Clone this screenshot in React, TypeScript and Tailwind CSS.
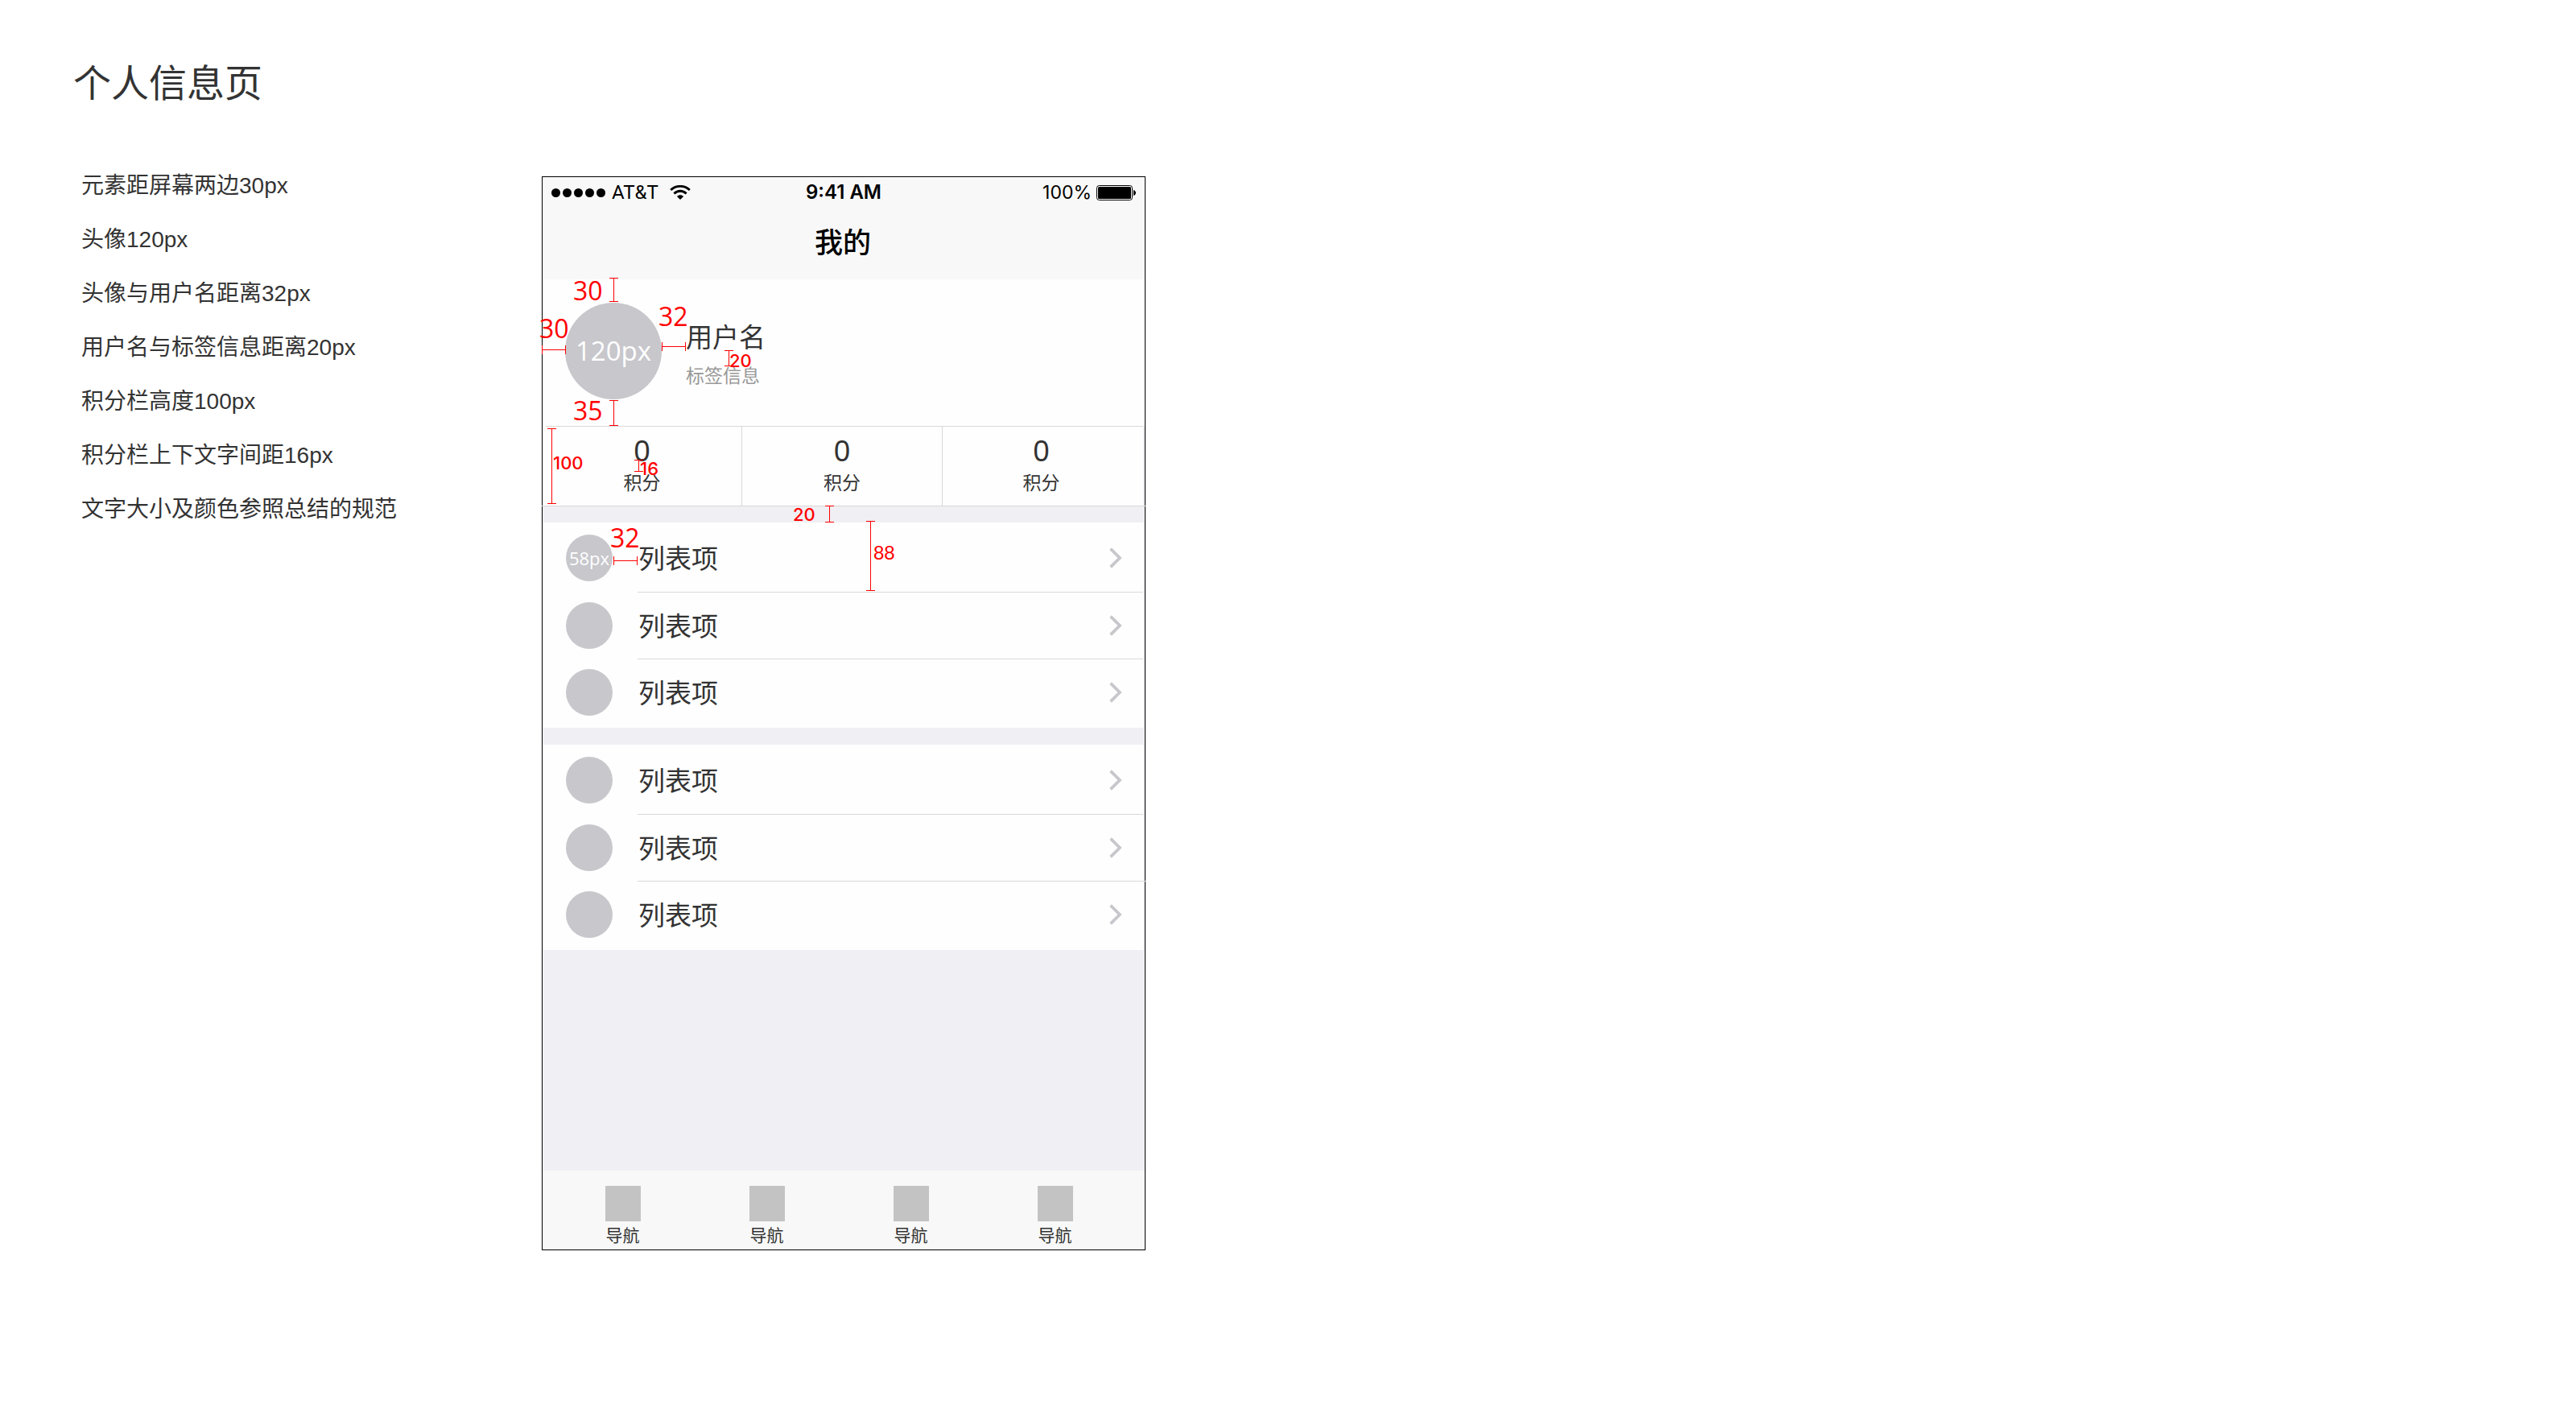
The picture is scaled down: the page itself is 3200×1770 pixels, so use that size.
import type { ReactNode } from "react";

const notes = [
  "元素距屏幕两边30px",
  "头像120px",
  "头像与用户名距离32px",
  "用户名与标签信息距离20px",
  "积分栏高度100px",
  "积分栏上下文字间距16px",
  "文字大小及颜色参照总结的规范",
];

const CJK = "font-['Noto_Sans_CJK_SC',sans-serif]";
const BIG = "font-['Open_Sans',sans-serif] text-[32px] leading-8";
const SMALL = "font-['Inter',sans-serif] text-[22px] leading-6 font-medium";

/* Vertical dimension bracket */
function VMark({ className }: { className: string }) {
  return (
    <span aria-hidden="true" className={`absolute flex w-[11px] justify-center border-y border-[#ff0000] ${className}`}>
      <span className="w-px bg-[#ff0000]" />
    </span>
  );
}

/* Horizontal dimension bracket */
function HMark({ className }: { className: string }) {
  return (
    <span aria-hidden="true" className={`absolute flex h-[11px] items-center border-x border-[#ff0000] ${className}`}>
      <span className="h-px w-full bg-[#ff0000]" />
    </span>
  );
}

function Label({ className, children }: { className: string; children: ReactNode }) {
  return <span className={`absolute whitespace-nowrap text-[#ff0000] ${className}`}>{children}</span>;
}

function Wifi() {
  return (
    <svg aria-hidden="true" className="h-[18px] w-[26px]" viewBox="0 0 26 18" fill="none" stroke="#000" strokeWidth="2.8">
      <path d="M1.2 6.1C7.8-.3 18.2-.3 24.8 6.1" />
      <path d="M5.4 10.4C9.7 6.2 16.3 6.2 20.6 10.4" />
      <path d="M13 18L8.9 13.9C11.2 11.8 14.8 11.8 17.1 13.9Z" fill="#000" stroke="none" />
    </svg>
  );
}

function Battery() {
  return (
    <svg aria-hidden="true" className="h-[19px] w-[49px]" viewBox="0 0 49 19">
      <rect x="0.5" y="0.5" width="44" height="18" rx="3" fill="#fff" stroke="#000" />
      <rect x="2" y="2" width="41" height="15" rx="1.5" fill="#000" />
      <path d="M46 6C48 6.6 49 8 49 9.5S48 12.4 46 13Z" fill="#000" />
    </svg>
  );
}

function Chevron() {
  return (
    <svg aria-hidden="true" className="h-[26px] w-4" viewBox="0 0 16 26" fill="none" stroke="#c7c7cc" strokeWidth="3.8">
      <path d="M1.6 1.6L13 13L1.6 24.4" />
    </svg>
  );
}

function Row({ height, badge, divider, children }: { height: string; badge?: string; divider?: string; children?: ReactNode }) {
  return (
    <li className="relative">
      <button type="button" className={`flex w-full items-center pr-[27px] pl-[29px] text-left ${height}`}>
        <span className="flex size-[58px] shrink-0 items-center justify-center rounded-full bg-[#c7c7cc] font-['Open_Sans',sans-serif] text-[22px] leading-6 text-white">
          {badge}
        </span>
        <span className="ml-8 flex-1 pb-[3px] text-[33px] leading-10 text-[#333]">列表项</span>
        <Chevron />
      </button>
      {divider && <div className={`ml-[118px] h-px bg-[#d9d9d9] ${divider}`} />}
      {children}
    </li>
  );
}

function Stat({ children, className = "" }: { children?: ReactNode; className?: string }) {
  return (
    <div className={`relative flex flex-col items-center pt-[13px] text-[#333] ${className}`}>
      <dd className="font-['Liberation_Sans',sans-serif] text-[36px] leading-9">0</dd>
      <dt className="mt-[5px] text-[23px] leading-7">积分</dt>
      {children}
    </div>
  );
}

export default function App() {
  return (
    <div className={`min-h-screen bg-white pb-[217px] ${CJK}`}>
      <h1 className="pt-[68px] pb-[85px] pl-[91px] text-[47px] leading-[64px] text-[#333]">个人信息页</h1>
      <main className="flex items-start">
        <ul className="flex shrink-0 basis-[673px] flex-col gap-10 pl-[101px] font-['Liberation_Sans','Noto_Sans_CJK_SC',sans-serif] text-[28px] leading-[27px] text-[#333]">
          {notes.map((n) => (
            <li key={n}>{n}</li>
          ))}
        </ul>

        <section className="mt-0.5 flex min-h-[1334px] max-w-full basis-[750px] flex-col border border-black bg-[#efeff4]">
          <header className="bg-[#f8f8f8] pb-[28px]">
            <div className="grid grid-cols-3 items-center px-[11px] pt-[6px] font-['Inter',sans-serif] text-[24px] leading-[26px] text-black">
              <div className="flex items-center">
                <span aria-hidden="true" className="mr-2 flex gap-[3px]">
                  {[0, 1, 2, 3, 4].map((i) => (
                    <span key={i} className="size-[11px] rounded-full bg-black" />
                  ))}
                </span>
                <span className="mr-[14px] font-['Roboto',sans-serif]">AT&amp;T</span>
                <Wifi />
              </div>
              <div className="text-center font-semibold">9:41 AM</div>
              <div className="flex items-center justify-end gap-[6px]">
                <span className="text-[23px]">100%</span>
                <Battery />
              </div>
            </div>
            <h2 className="mt-[27px] pr-0.5 text-center text-[35px] leading-10 font-medium text-black">我的</h2>
          </header>

          <div className="relative flex h-[182px] bg-[#fefefe] pt-[29px] pl-7">
            <div className="flex size-[120px] items-center justify-center rounded-full bg-[#c7c7cc] font-['Open_Sans',sans-serif] text-[33px] leading-10 text-white">
              120px
            </div>
            <div className="ml-[30px] pt-[21px]">
              <p className="text-[33px] leading-10 text-[#333]">用户名</p>
              <p className="mt-[14px] text-[23px] leading-7 text-[#999]">标签信息</p>
            </div>
            <VMark className="-top-0.5 left-[83px] h-[30px]" />
            <Label className={`-top-0.5 left-[38px] ${BIG}`}>30</Label>
            <HMark className="top-[82px] -left-px w-[30px]" />
            <Label className={`top-[45px] -left-1 ${BIG}`}>30</Label>
            <HMark className="top-[78px] left-[148px] w-[30px]" />
            <Label className={`top-[30px] left-[144px] ${BIG}`}>32</Label>
            <VMark className="top-[88px] left-[226px] h-5" />
            <Label className={`top-[89px] left-[232px] ${SMALL}`}>20</Label>
            <VMark className="top-[150px] left-[83px] h-8" />
            <Label className={`top-[147px] left-[38px] ${BIG}`}>35</Label>
          </div>

          <div className="mr-0.5 bg-[#fefefe]">
            <div className="ml-1 h-px bg-[#d9d9d9]" />
            <dl className="grid h-[98px] grid-cols-[248fr_249fr_249fr]">
              <Stat className="border-r border-[#d9d9d9]">
                <VMark className="top-0.5 left-[6px] h-[94px]" />
                <Label className={`top-[33px] left-[13px] ${SMALL}`}>100</Label>
                <VMark className="top-[41px] left-[114px] h-[15px]" />
                <Label className={`top-10 left-[121px] ${SMALL}`}>16</Label>
              </Stat>
              <Stat className="border-r border-[#d9d9d9]" />
              <Stat className="pr-1" />
            </dl>
          </div>
          <div className="-mx-px h-px bg-[#d9d9d9]" />

          <div className="relative h-5">
            <VMark className="-top-px left-[351px] h-[21px]" />
            <Label className={`-top-0.5 left-[311px] ${SMALL}`}>20</Label>
          </div>
          <ul className="mr-px bg-[#fefefe]">
            <Row height="h-[86px] pt-0.5" badge="58px" divider="mr-px">
              <HMark className="top-[42px] left-[88px] w-[30px]" />
              <Label className={`top-[3px] left-[84px] ${BIG}`}>32</Label>
              <VMark className="-top-0.5 left-[402px] h-[87px]" />
              <Label className="top-[26px] left-[411px] font-['Liberation_Sans',sans-serif] text-[24px] leading-6">88</Label>
            </Row>
            <Row height="h-[82px]" divider="mr-px" />
            <Row height="h-[85px] pb-[3px]" />
          </ul>
          <ul className="mt-[21px] mr-px bg-[#fefefe]">
            <Row height="h-[86px] pt-0.5" divider="mr-px" />
            <Row height="h-[82px]" divider="-mr-0.5" />
            <Row height="h-[85px] pb-[3px]" />
          </ul>

          <nav className="mt-auto flex bg-[#f8f8f8] pr-[22px] pl-[10px]">
            {[0, 1, 2, 3].map((i) => (
              <button key={i} type="button" className="flex flex-1 flex-col items-center pt-[19px]">
                <span className="size-11 bg-[#c3c3c3]" />
                <span className="pt-[3px] pb-[6px] text-[21px] leading-[26px] text-[#333]">导航</span>
              </button>
            ))}
          </nav>
        </section>
      </main>
    </div>
  );
}
